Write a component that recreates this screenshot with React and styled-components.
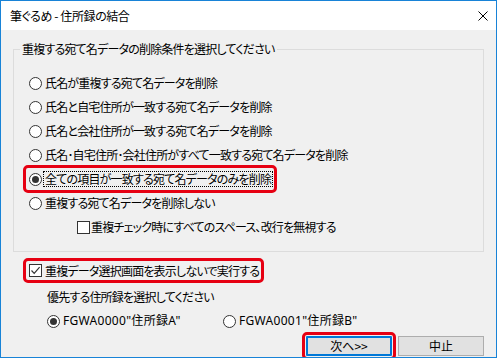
import React from "react";
import styled, { createGlobalStyle } from "styled-components";

const GlobalStyle = createGlobalStyle`
  html, body {
    margin: 0;
    padding: 0;
    background: #ffffff;
  }
  body {
    font-family: "Noto Sans CJK JP", "Noto Sans", sans-serif;
    font-size: 12px;
    color: #000;
  }
  * {
    box-sizing: border-box;
  }
`;

const Window = styled.div`
  width: 497px;
  height: 358px;
  border: 1px solid #1883d7;
  background: #f0f0f0;
  display: flex;
  flex-direction: column;
  font-feature-settings: "palt";
  letter-spacing: -0.8px;
  overflow: hidden;
`;

const TitleBar = styled.div`
  height: 29px;
  background: #ffffff;
  display: flex;
  align-items: center;
  justify-content: space-between;
  padding: 0 8px 0 9px;
  flex-shrink: 0;
  span {
    line-height: 14px;
    letter-spacing: -0.4px;
  }
`;

const Body = styled.div`
  flex: 1;
  padding: 12px 12px 0 12px;
  display: flex;
  flex-direction: column;
`;

const Group = styled.fieldset`
  margin: 0;
  width: 471px;
  min-width: 0;
  padding: 15px 0 12px 0;
  border: 1px solid #dcdcdc;
  legend {
    margin-left: 6px;
    padding: 0 2px;
    line-height: 14px;
  }
`;

const Row = styled.div`
  height: 24px;
  display: flex;
  align-items: center;
  padding-left: ${(p) => p.$indent || 15}px;
`;

const Option = styled.span`
  display: inline-flex;
  align-items: center;
  height: ${(p) => (p.$mark ? p.$h || 22 : 14)}px;
  ${(p) =>
    p.$mark &&
    `
    margin-left: -3px;
    padding: 0 2px 0 3px;
    outline: 3px solid #e60012;
    border-radius: 2px;
  `}
`;

const Radio = styled.span`
  width: 13px;
  height: 13px;
  border-radius: 50%;
  border: 1px solid #333333;
  background: #ffffff;
  display: inline-flex;
  align-items: center;
  justify-content: center;
  flex-shrink: 0;
  &::after {
    content: "";
    display: ${(p) => (p.$on ? "block" : "none")};
    width: 7px;
    height: 7px;
    border-radius: 50%;
    background: #333333;
  }
`;

const Check = styled.span`
  width: 13px;
  height: 13px;
  border: 1px solid #333333;
  background: #ffffff;
  display: inline-flex;
  align-items: center;
  justify-content: center;
  flex-shrink: 0;
`;

const Label = styled.span`
  margin-left: ${(p) => p.$gap || 3}px;
  line-height: 14px;
  white-space: nowrap;
  ${(p) =>
    p.$focus &&
    `
    margin-left: 2px;
    padding: 0 1px;
    outline: 1px dotted #000;
    outline-offset: 0;
  `}
`;

const Bottom = styled.div`
  padding-left: 16px;
  display: flex;
  flex-direction: column;
`;

const CheckLine = styled.div`
  margin-top: 9px;
  display: flex;
`;

const Hint = styled.div`
  margin-top: 10px;
  padding-left: 18px;
  line-height: 14px;
`;

const Choices = styled.div`
  margin-top: 10px;
  padding-left: 18px;
  display: grid;
  grid-template-columns: 176px auto;
  align-items: center;
  font-family: "Noto Sans", "Noto Sans CJK JP", sans-serif;
  letter-spacing: 0.3px;
`;

const Choice = styled.div`
  display: flex;
  align-items: center;
`;

const Buttons = styled.div`
  margin-top: 8px;
  display: flex;
  justify-content: flex-end;
  gap: 6px;
`;

const Button = styled.div`
  width: 86px;
  height: 20px;
  background: #e1e1e1;
  border: ${(p) => (p.$default ? "2px solid #0078d7" : "1px solid #adadad")};
  display: flex;
  align-items: center;
  justify-content: center;
  line-height: 14px;
  letter-spacing: 0;
  ${(p) =>
    p.$mark &&
    `
    outline: 3px solid #e60012;
    outline-offset: 1px;
    border-radius: 1px;
  `}
`;

const CloseIcon = () => (
  <svg width="10" height="10" viewBox="0 0 10 10">
    <path d="M0.5 0.5 L9.5 9.5 M9.5 0.5 L0.5 9.5" stroke="#000" strokeWidth="1" />
  </svg>
);

const Tick = () => (
  <svg width="11" height="11" viewBox="0 0 11 11">
    <path d="M1.5 5.5 L4.2 8.3 L9.6 2.2" stroke="#333" strokeWidth="1.2" fill="none" />
  </svg>
);

const options = [
  "氏名が重複する宛て名データを削除",
  "氏名と自宅住所が一致する宛て名データを削除",
  "氏名と会社住所が一致する宛て名データを削除",
  "氏名･自宅住所･会社住所がすべて一致する宛て名データを削除",
  "全ての項目が一致する宛て名データのみを削除",
  "重複する宛て名データを削除しない",
];

export default function App() {
  return (
    <>
      <GlobalStyle />
      <Window>
        <TitleBar>
          <span>筆ぐるめ - 住所録の結合</span>
          <CloseIcon />
        </TitleBar>
        <Body>
          <Group>
            <legend>重複する宛て名データの削除条件を選択してください</legend>
            {options.map((text, i) => (
              <Row key={text}>
                <Option $mark={i === 4}>
                  <Radio $on={i === 4} />
                  <Label $focus={i === 4}>{text}</Label>
                </Option>
              </Row>
            ))}
            <Row $indent={63}>
              <Check />
              <Label $gap={1}>重複チェック時にすべてのスペース、改行を無視する</Label>
            </Row>
          </Group>
          <Bottom>
            <CheckLine>
              <Option $mark $h={19}>
                <Check>
                  <Tick />
                </Check>
                <Label>重複データ選択画面を表示しないで実行する</Label>
              </Option>
            </CheckLine>
            <Hint>優先する住所録を選択してください</Hint>
            <Choices>
              <Choice>
                <Radio $on />
                <Label>FGWA0000"住所録A"</Label>
              </Choice>
              <Choice>
                <Radio />
                <Label>FGWA0001"住所録B"</Label>
              </Choice>
            </Choices>
            <Buttons>
              <Button $default $mark>
                次へ&gt;&gt;
              </Button>
              <Button>中止</Button>
            </Buttons>
          </Bottom>
        </Body>
      </Window>
    </>
  );
}
